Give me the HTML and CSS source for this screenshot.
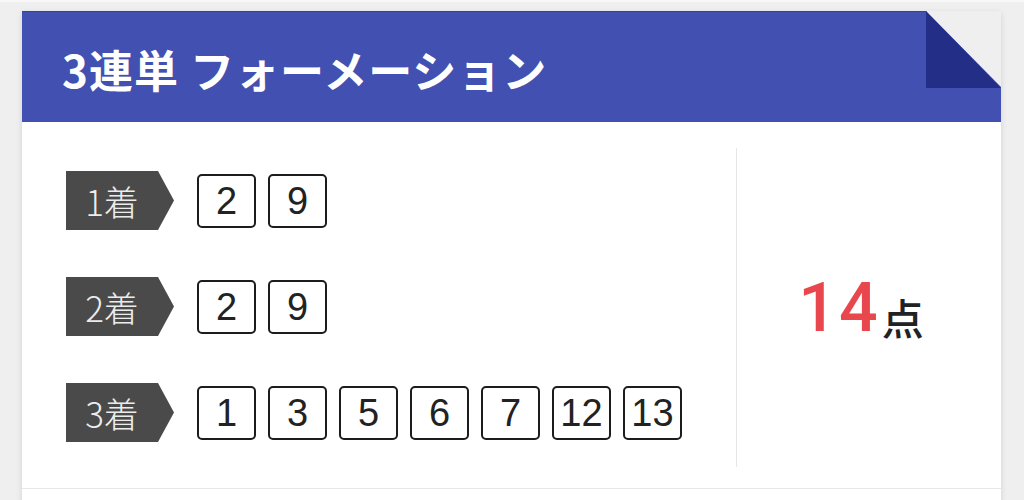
FILE: index.html
```html
<!DOCTYPE html>
<html lang="ja">
<head>
    <meta charset="UTF-8">
    <title>3連単 フォーメーション</title>
    <link rel="stylesheet" href="styles.css">
</head>
<body>
<div class="bet_card">
    <div class="bet_head">
        <h2 class="bet_title">3連単 フォーメーション</h2>
        <div class="bet_fold"></div>
    </div>

    <div class="bet_body">
        <div class="bet_picks">
            <div class="pick_row">
                <span class="pick_tag">1着</span>
                <span class="pick_num">2</span>
                <span class="pick_num">9</span>
            </div>
            <div class="pick_row">
                <span class="pick_tag">2着</span>
                <span class="pick_num">2</span>
                <span class="pick_num">9</span>
            </div>
            <div class="pick_row">
                <span class="pick_tag">3着</span>
                <span class="pick_num">1</span>
                <span class="pick_num">3</span>
                <span class="pick_num">5</span>
                <span class="pick_num">6</span>
                <span class="pick_num">7</span>
                <span class="pick_num">12</span>
                <span class="pick_num">13</span>
            </div>
        </div>

        <div class="bet_total">
            <span class="total_count">14</span><span class="total_unit">点</span>
        </div>
    </div>

    <div class="bet_foot"></div>
</div>
</body>
</html>
```

FILE: styles.css
```css
body {
    margin: 0;
    padding: 9px 0 0 22px;
    border-top: 2px solid #f8f8f8;
    background: #efefef;
    font-family: "Noto Sans CJK JP", sans-serif;
    overflow: hidden;
}

.bet_card {
    width: 979px;
    box-shadow: 0 2px 6px rgba(0, 0, 0, 0.12);
}

/* header with folded corner */
.bet_head {
    position: relative;
    box-sizing: border-box;
    height: 111px;
    border-top: 1px solid #34429f;
    background: #4150b1;
    clip-path: polygon(0 0, 904px 0, 100% 76px, 100% 100%, 0 100%);
}

.bet_title {
    margin: 0;
    padding: 30px 0 0 40px;
    font-size: 44px;
    font-weight: 700;
    line-height: 54px;
    letter-spacing: 1px;
    color: #ffffff;
}

.bet_fold {
    position: absolute;
    left: 904px;
    top: -1px;
    width: 75px;
    height: 77px;
    background: #232e87;
    clip-path: polygon(0 0, 0 100%, 100% 100%);
}

.bet_body {
    display: flex;
    height: 366px;
    background: #ffffff;
    border-bottom: 1px solid #e8e8e8;
}

.bet_picks {
    flex: 1;
    display: flex;
    flex-direction: column;
    gap: 47px;
    padding: 49px 0 0 44px;
}

.pick_row {
    display: flex;
    align-items: center;
    height: 59px;
}

.pick_tag {
    width: 92px;
    height: 59px;
    padding-right: 16px;
    margin-right: 23px;
    background: #4a4a4a;
    clip-path: polygon(0 0, 92px 0, 100% 50%, 92px 100%, 0 100%);
    color: #ececec;
    font-size: 35px;
    font-weight: 300;
    line-height: 59px;
    text-align: center;
}

.pick_num {
    box-sizing: border-box;
    width: 59px;
    height: 54px;
    margin-right: 12px;
    border: 2px solid #1c1c1c;
    border-radius: 5px;
    font-family: "Liberation Sans", Arial, sans-serif;
    font-size: 38px;
    line-height: 50px;
    text-align: center;
    color: #222222;
}

.bet_total {
    box-sizing: border-box;
    width: 265px;
    margin: 26px 0 21px;
    padding-right: 16px;
    border-left: 1px solid #e6e6e6;
    display: flex;
    justify-content: center;
    align-items: center;
}

.total_count {
    font-family: Roboto, sans-serif;
    font-size: 68px;
    font-weight: 500;
    line-height: 1;
    letter-spacing: 2px;
    color: #e8484d;
}

.total_unit {
    margin-left: 2px;
    margin-top: 18px;
    font-size: 42px;
    font-weight: 500;
    line-height: 1;
    color: #222222;
}

.bet_foot {
    height: 20px;
    background: #ffffff;
}
```
